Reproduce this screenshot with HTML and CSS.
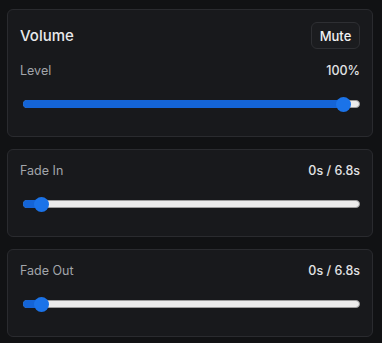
FILE: index.html
```html
<!DOCTYPE html>
<html lang="en">

<head>
    <meta charset="UTF-8">
    <title>Audio</title>
    <link rel="stylesheet" href="styles.css">
</head>

<body>

    <div class="panel">
        <div class="card">
            <div class="card-head">
                <h2>Volume</h2>
                <button class="btn-mute">Mute</button>
            </div>
            <div class="row">
                <span class="label">Level</span>
                <span class="value">100%</span>
            </div>
            <div class="slider">
                <div class="track"></div>
                <div class="fill" style="width: 95%"><span class="thumb"></span></div>
            </div>
        </div>

        <div class="card">
            <div class="row first">
                <span class="label">Fade In</span>
                <span class="value">0s / 6.8s</span>
            </div>
            <div class="slider">
                <div class="track"></div>
                <div class="fill" style="width: 5.5%"><span class="thumb"></span></div>
            </div>
        </div>

        <div class="card">
            <div class="row first">
                <span class="label">Fade Out</span>
                <span class="value">0s / 6.8s</span>
            </div>
            <div class="slider">
                <div class="track"></div>
                <div class="fill" style="width: 5.5%"><span class="thumb"></span></div>
            </div>
        </div>
    </div>

</body>

</html>
```

FILE: styles.css
```css
* {
    margin: 0;
    padding: 0;
    box-sizing: border-box;
}

body {
    font-family: Inter, 'Noto Sans', sans-serif;
    background: #111214;
    color: #e4e5e7;
    padding: 9px 9px 0 7px;
}

.panel {
    display: flex;
    flex-direction: column;
    gap: 12px;
    width: 366px;
}

.card {
    background: #18191c;
    border: 1px solid #2a2b2f;
    border-radius: 6px;
    padding: 12px 12px 22px;
}

.card-head {
    display: flex;
    justify-content: space-between;
    align-items: center;
    height: 27px;
}

.card-head h2 {
    font-size: 15px;
    font-weight: 500;
    color: #e8e9eb;
}

.btn-mute {
    height: 27px;
    width: 49px;
    background: #1b1c1f;
    border: 1px solid #2e2f33;
    border-radius: 6px;
    color: #f1f1f2;
    font-family: inherit;
    font-size: 13px;
    font-weight: 500;
}

.row {
    display: flex;
    justify-content: space-between;
    align-items: center;
    height: 16px;
    margin-top: 13px;
    font-size: 12.5px;
}

.row.first {
    margin-top: 0;
}

.label {
    color: #a2a5aa;
}

.value {
    color: #e2e3e5;
    font-weight: 500;
}

.slider {
    position: relative;
    height: 20px;
    margin: 16px 0 0 3px;
}

.track {
    position: absolute;
    left: 0;
    right: 0;
    top: 6px;
    height: 8px;
    border-radius: 4px;
    background: #ececec;
    border: 1px solid #9d9d9d;
}

.fill {
    position: absolute;
    left: 0;
    top: 6px;
    height: 8px;
    border-radius: 4px 0 0 4px;
    background: #1464d6;
}

.thumb {
    position: absolute;
    right: -7.5px;
    top: -3.5px;
    width: 15px;
    height: 15px;
    border-radius: 50%;
    background: #1b73e8;
}
```
